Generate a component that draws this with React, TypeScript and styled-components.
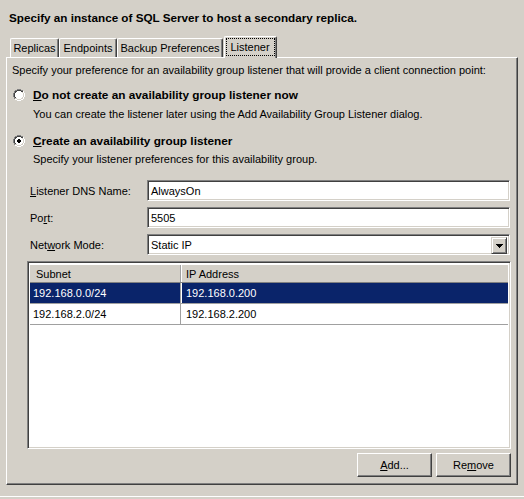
import React from "react";
import styled, { createGlobalStyle, css } from "styled-components";

const Global = createGlobalStyle`
  html, body { margin: 0; padding: 0; background: #d4d0c8; }
  body { font-family: Tahoma, "Liberation Sans", Arial, sans-serif; font-size: 11px; color: #000; }
  * { box-sizing: border-box; }
`;

const FONT = `Tahoma, "Liberation Sans", Arial, sans-serif`;

const Window = styled.div`
  width: 524px;
  height: 499px;
  background: #d4d0c8;
  overflow: hidden;
  display: flex;
  flex-direction: column;
  font-family: ${FONT};
  font-size: 11px;
`;

const Title = styled.div`
  font-weight: bold;
  font-size: 11.7px;
  padding: 11px 0 0 9px;
  height: 36px;
  line-height: 14px;
`;

const TabStrip = styled.div`
  display: flex;
  align-items: flex-end;
  padding-left: 10px;
  height: 21px;
  position: relative;
  z-index: 2;
`;

const Tab = styled.div<{ $w: number; $active?: boolean }>`
  width: ${(p) => p.$w}px;
  height: ${(p) => (p.$active ? 22 : 19)}px;
  margin-bottom: ${(p) => (p.$active ? -1 : 0)}px;
  margin-left: ${(p) => (p.$active ? 1 : 0)}px;
  background: #d4d0c8;
  border-top: 1px solid #fff;
  border-left: 1px solid #fff;
  border-right: 1px solid #404040;
  box-shadow: inset -1px 0 0 #808080;
  border-radius: 2px 2px 0 0;
  display: flex;
  align-items: flex-start;
  justify-content: center;
  padding-top: ${(p) => (p.$active ? 1 : 2)}px;
  line-height: 14px;
  white-space: nowrap;
`;

const Focus = styled.span`
  outline: 1px dotted #000;
  outline-offset: -1px;
  width: 49px;
  height: 18px;
  display: flex;
  align-items: center;
  justify-content: center;
  margin-left: -1px;
`;

const Panel = styled.div`
  margin: 0 6px;
  height: 428px;
  border-top: 1px solid #fff;
  border-left: 1px solid #fff;
  border-right: 1px solid #404040;
  border-bottom: 1px solid #404040;
  box-shadow: inset -1px -1px 0 #808080;
  padding: 5px 0 0 5px;
  display: flex;
  flex-direction: column;
`;

const Text = styled.div<{ $indent?: number; $mt?: number }>`
  line-height: 14px;
  padding-left: ${(p) => p.$indent ?? 0}px;
  margin-top: ${(p) => p.$mt ?? 0}px;
  white-space: nowrap;
`;

const RadioRow = styled.div<{ $mt: number }>`
  display: flex;
  align-items: center;
  gap: 8px;
  margin-top: ${(p) => p.$mt}px;
  margin-left: 1px;
  height: 14px;
  font-weight: bold;
  font-size: 11.8px;
  white-space: nowrap;
`;

const U = styled.span`
  text-decoration: underline;
  text-underline-offset: 1px;
`;

const FieldGrid = styled.div`
  display: grid;
  grid-template-columns: 117px 363px;
  row-gap: 6px;
  margin-top: 14px;
  margin-left: 18px;
  align-items: center;
`;

const Label = styled.div`
  line-height: 14px;
  white-space: nowrap;
`;

const sunken = css`
  border-top: 1px solid #808080;
  border-left: 1px solid #808080;
  border-right: 1px solid #fff;
  border-bottom: 1px solid #fff;
  box-shadow: inset 1px 1px 0 #404040, inset -1px -1px 0 #d4d0c8;
`;

const Input = styled.div`
  ${sunken};
  height: 21px;
  background: #fff;
  display: flex;
  align-items: center;
  padding: 0 3px;
  line-height: 14px;
  position: relative;
`;

const DropBtn = styled.div`
  position: absolute;
  right: 2px;
  top: 2px;
  width: 16px;
  height: 17px;
  background: #d4d0c8;
  border-top: 1px solid #d4d0c8;
  border-left: 1px solid #d4d0c8;
  border-right: 1px solid #404040;
  border-bottom: 1px solid #404040;
  box-shadow: inset 1px 1px 0 #fff, inset -1px -1px 0 #808080;
  display: flex;
  align-items: center;
  justify-content: center;
`;

const Table = styled.div`
  ${sunken};
  margin-top: 6px;
  margin-left: 15px;
  width: 484px;
  height: 188px;
  background: #fff;
  padding: 2px;
  display: flex;
  flex-direction: column;
`;

const Row = styled.div<{ $head?: boolean; $sel?: boolean }>`
  display: grid;
  grid-template-columns: 150px 1fr;
  height: ${(p) => (p.$head ? 19 : 21)}px;
  background: ${(p) => (p.$head ? "#d4d0c8" : p.$sel ? "#0a246a" : "#fff")};
  color: ${(p) => (p.$sel ? "#fff" : "#000")};
  ${(p) =>
    p.$head
      ? css`
          border-top: 1px solid #fff;
          border-bottom: 1px solid #808080;
        `
      : css`
          border-bottom: 1px solid #a0a0a0;
        `}
`;

const Cell = styled.div<{ $head?: boolean }>`
  display: flex;
  align-items: center;
  padding-left: ${(p) => (p.$head ? 6 : 3)}px;
  line-height: 14px;
  white-space: nowrap;
  & + & {
    border-left: 1px solid ${(p) => (p.$head ? "#808080" : "#a0a0a0")};
    ${(p) => p.$head && "box-shadow: inset 1px 0 0 #fff;"}
    padding-left: 5px;
  }
`;

const Buttons = styled.div`
  display: flex;
  justify-content: flex-end;
  gap: 4px;
  margin-top: 4px;
  margin-right: 6px;
`;

const Button = styled.div`
  width: 75px;
  height: 24px;
  background: #d4d0c8;
  border-top: 1px solid #fff;
  border-left: 1px solid #fff;
  border-right: 1px solid #404040;
  border-bottom: 1px solid #404040;
  box-shadow: inset -1px -1px 0 #808080;
  display: flex;
  align-items: center;
  justify-content: center;
  line-height: 14px;
`;

const Separator = styled.div`
  margin-top: 11px;
  border-top: 1px solid #fff;
  height: 1px;
`;

const Radio = ({ checked }: { checked?: boolean }) => (
  <svg width="12" height="12" viewBox="0 0 12 12" shapeRendering="crispEdges">
    <path d="M4 0h4v1H4zM2 1h2v1H2zM8 1h2v1H8zM1 2h1v2H1zM0 4h1v4H0zM1 8h1v2H1z" fill="#808080" />
    <path d="M4 1h4v1H4zM2 2h2v1H2zM8 2h2v1H8zM2 3h1v1H2zM1 4h1v4H1zM2 8h1v1H2z" fill="#404040" />
    <path d="M10 2h1v2h-1zM11 4h1v4h-1zM10 8h1v2h-1zM8 10h2v1H8zM2 10h2v1H2zM4 11h4v1H4z" fill="#fff" />
    <path d="M9 3h1v1H9zM10 4h1v4h-1zM9 8h1v1H9zM8 9h1v1H8zM3 9h1v1H3zM4 10h4v1H4z" fill="#d4d0c8" />
    <path d="M4 2h4v1H4zM3 3h6v1H3zM2 4h8v4H2zM3 8h6v1H3zM4 9h4v1H4z" fill="#fff" />
    {checked && <path d="M5 4h2v1H5zM4 5h4v2H4zM5 7h2v1H5z" fill="#000" />}
  </svg>
);

export default function App() {
  return (
    <Window>
      <Global />
      <Title>Specify an instance of SQL Server to host a secondary replica.</Title>
      <TabStrip>
        <Tab $w={49}>Replicas</Tab>
        <Tab $w={58}>Endpoints</Tab>
        <Tab $w={106}>Backup Preferences</Tab>
        <Tab $w={53} $active>
          <Focus>Listener</Focus>
        </Tab>
      </TabStrip>
      <Panel>
        <Text>
          Specify your preference for an availability group listener that will provide a client connection point:
        </Text>
        <RadioRow $mt={11}>
          <Radio />
          <span>
            <U>D</U>o not create an availability group listener now
          </span>
        </RadioRow>
        <Text $indent={21} $mt={5}>
          You can create the listener later using the Add Availability Group Listener dialog.
        </Text>
        <RadioRow $mt={13}>
          <Radio checked />
          <span>
            <U>C</U>reate an availability group listener
          </span>
        </RadioRow>
        <Text $indent={21} $mt={4}>
          Specify your listener preferences for this availability group.
        </Text>
        <FieldGrid>
          <Label>
            <U>L</U>istener DNS Name:
          </Label>
          <Input>AlwaysOn</Input>
          <Label>
            Po<U>r</U>t:
          </Label>
          <Input>5505</Input>
          <Label>
            Net<U>w</U>ork Mode:
          </Label>
          <Input>
            Static IP
            <DropBtn>
              <svg width="7" height="4" viewBox="0 0 7 4" shapeRendering="crispEdges">
                <path d="M0 0h7v1H0zM1 1h5v1H1zM2 2h3v1H2zM3 3h1v1H3z" fill="#000" />
              </svg>
            </DropBtn>
          </Input>
        </FieldGrid>
        <Table>
          <Row $head>
            <Cell $head>Subnet</Cell>
            <Cell $head>IP Address</Cell>
          </Row>
          <Row $sel>
            <Cell>192.168.0.0/24</Cell>
            <Cell>192.168.0.200</Cell>
          </Row>
          <Row>
            <Cell>192.168.2.0/24</Cell>
            <Cell>192.168.2.200</Cell>
          </Row>
        </Table>
        <Buttons>
          <Button>
            <span>
              <U>A</U>dd...
            </span>
          </Button>
          <Button>
            <span>
              Re<U>m</U>ove
            </span>
          </Button>
        </Buttons>
      </Panel>
      <Separator />
    </Window>
  );
}
